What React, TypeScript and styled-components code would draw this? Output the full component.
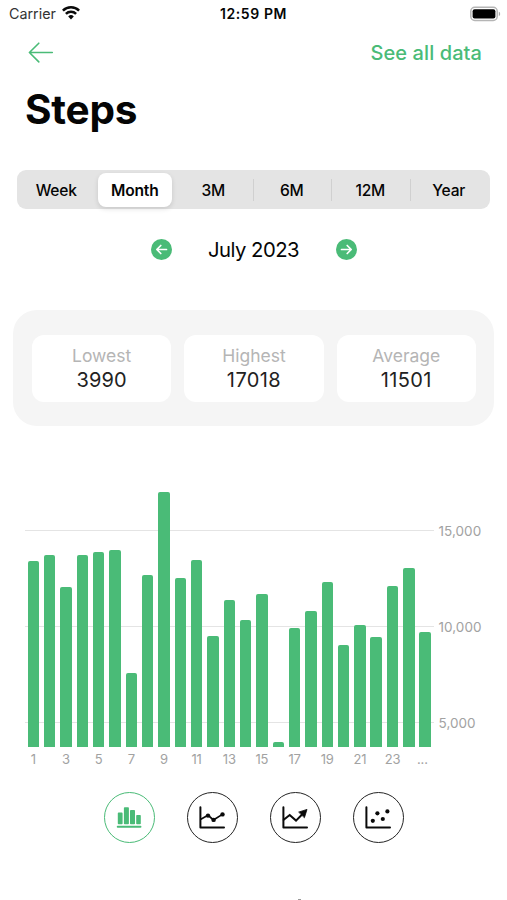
import React from "react";
import styled, { createGlobalStyle } from "styled-components";

const GREEN = "#4abb77";

const GlobalStyle = createGlobalStyle`
  *, *::before, *::after { box-sizing: border-box; }
  body { margin: 0; background: #fff; overflow: hidden; }
  button { border: 0; padding: 0; margin: 0; background: none; font: inherit; color: inherit; }
`;

const Screen = styled.main`
  width: 507px;
  height: 900px;
  overflow: hidden;
  background: #fff;
  color: #050505;
  font-family: Inter, "Liberation Sans", sans-serif;
  display: flex;
  flex-direction: column;
`;

const StatusBar = styled.div`
  height: 28px;
  padding: 0 6px 0 9px;
  display: grid;
  grid-template-columns: 1fr auto 1fr;
  align-items: center;
  line-height: 28px;
`;

const Carrier = styled.div`
  display: flex;
  align-items: center;
  gap: 6px;
  font-size: 14.3px;
  color: #333;
  svg { margin-top: -2px; }
`;

const Clock = styled.div`
  font-size: 14px;
  font-weight: 600;
  letter-spacing: 0.6px;
  margin-left: -3px;
`;

const Battery = styled.svg`
  justify-self: end;
  margin-top: -1px;
`;

const NavBar = styled.nav`
  height: 50px;
  padding: 0 25px 0 28px;
  display: flex;
  align-items: center;
  justify-content: space-between;
  color: ${GREEN};
`;

const SeeAll = styled.button`
  font-size: 20px;
  font-weight: 500;
  letter-spacing: 0.08px;
`;

const Title = styled.h1`
  margin: 8px 0 0 25px;
  font-size: 40.5px;
  line-height: 48px;
  font-weight: 700;
  letter-spacing: -0.2px;
`;

const Segments = styled.div`
  margin: 36px 17px 0;
  height: 39px;
  border-radius: 9px;
  background: #e4e4e4;
  display: grid;
  grid-template-columns: repeat(6, 1fr);
  padding: 3px 2px 2px 0;
`;

const Segment = styled.button<{ $active?: boolean; $divided?: boolean }>`
  margin: ${(p) => (p.$active ? "0 2px" : "0")};
  border-radius: ${(p) => (p.$active ? "8px" : "0")};
  background: ${(p) =>
    p.$active
      ? "#fff"
      : p.$divided
        ? "linear-gradient(#d0d0d0, #d0d0d0) left 0 center / 1px 22px no-repeat"
        : "none"};
  box-shadow: ${(p) => (p.$active ? "0 2px 5px rgba(0, 0, 0, 0.12)" : "none")};
  font-size: 15.6px;
  font-weight: ${(p) => (p.$active ? 600 : 500)};
  letter-spacing: -0.2px;
`;

const Period = styled.div`
  height: 80px;
  display: grid;
  grid-template-columns: 21px 164px 21px;
  justify-content: center;
  align-items: center;
`;

const PeriodLabel = styled.div`
  text-align: center;
  font-size: 20.3px;
  letter-spacing: -0.5px;
`;

const Summary = styled.section`
  margin: 21px 13px 0;
  height: 116px;
  border-radius: 24px;
  background: #f5f5f5;
  padding: 25px 18px 24px 19px;
  display: grid;
  grid-template-columns: repeat(3, 1fr);
  gap: 13px;
`;

const Stat = styled.div`
  border-radius: 12px;
  background: #fff;
  display: flex;
  flex-direction: column;
  align-items: center;
  padding-top: 9px;
`;

const StatLabel = styled.span`
  font-size: 17.5px;
  line-height: 24px;
  color: #b5b5b5;
`;

const StatValue = styled.span<{ $wide?: boolean }>`
  font-size: 20px;
  line-height: 24px;
  color: #222;
  letter-spacing: ${(p) => (p.$wide ? "0.4px" : "0.1px")};
`;

const Chart = styled.section`
  margin: 54px 0 0 25px;
  display: grid;
  grid-template-columns: 409px 1fr;
  grid-template-rows: 266.5px 27px;
`;

const GridLines = styled.div`
  grid-area: 1 / 1;
  padding-top: 50px;
  display: flex;
  flex-direction: column;
  gap: 95.2px;
`;

const GridLine = styled.div`
  height: 1px;
  background: #e4e4e4;
`;

const Bars = styled.div`
  grid-area: 1 / 1;
  padding: 0 3px 0 2.6px;
  display: flex;
  justify-content: space-between;
  align-items: flex-end;
`;

const Bar = styled.div`
  width: 11.4px;
  border-radius: 2px 2px 0 0;
  background: ${GREEN};
`;

const YAxis = styled.div`
  grid-area: 1 / 2;
  padding: 38.5px 0 0 4.5px;
  display: flex;
  flex-direction: column;
  gap: 72.3px;
  font-size: 13.5px;
  line-height: 24px;
  letter-spacing: 0.05px;
  color: #a2a2a2;
`;

const XAxis = styled.div`
  grid-area: 2 / 1;
  display: grid;
  grid-template-columns: repeat(12, 32.66px) 27px;
  margin-left: -8px;
  font-size: 13px;
  line-height: 24px;
  letter-spacing: -0.2px;
  color: #a2a2a2;
  text-align: center;
`;

const ChartTypes = styled.div`
  margin-top: 18px;
  display: flex;
  justify-content: center;
  gap: 32px;
`;

const TypeButton = styled.button<{ $active?: boolean }>`
  width: 51px;
  height: 51px;
  border-radius: 50%;
  border: 1.5px solid ${(p) => (p.$active ? GREEN : "#242424")};
  color: ${(p) => (p.$active ? GREEN : "#0a0a0a")};
  display: grid;
  place-items: center;
`;

const HomeHint = styled.div`
  margin: auto auto 0;
  padding-left: 91px;
  height: 1px;
  &::after {
    content: "";
    display: block;
    width: 3px;
    height: 1px;
    background: #999;
  }
`;

const SEGMENTS = ["Week", "Month", "3M", "6M", "12M", "Year"];

const STEPS = [
  13400, 13743, 12065, 13712, 13899, 14003, 7597, 12673, 17018, 12532, 13452,
  9519, 11374, 10350, 11701, 3990, 9919, 10802, 12309, 9036, 10075, 9483,
  12101, 13068, 9743,
];

const AXIS_MIN = 3780;
const PX_PER_STEP = 0.01925;

const DAYS = ["1", "3", "5", "7", "9", "11", "13", "15", "17", "19", "21", "23", "..."];

function WifiIcon() {
  return (
    <svg width="18" height="14" viewBox="0 0 18 14" fill="none" stroke="#0a0a0a" strokeWidth="2.5">
      <path d="M0.9 4.7a11.5 11.5 0 0 1 16.2 0" />
      <path d="M3.9 7.9a7.2 7.2 0 0 1 10.2 0" />
      <path d="M6.2 10.4a4 4 0 0 1 5.6 0L9 13.4z" fill="#0a0a0a" stroke="none" />
    </svg>
  );
}

function BatteryIcon() {
  return (
    <Battery width="31" height="16" viewBox="0 0 31 16">
      <rect x="0.8" y="1.3" width="26.4" height="13.2" rx="4" fill="#fff" stroke="#b5b5b5" strokeWidth="1.5" />
      <rect x="2.6" y="3.2" width="22.8" height="9.4" rx="2" fill="#000" />
      <path d="M28.8 5.7c1.8.6 1.8 3.8 0 4.4z" fill="#aaa" />
    </Battery>
  );
}

function BackArrow() {
  return (
    <svg width="26" height="22" viewBox="0 0 26 22" fill="none" stroke="currentColor" strokeWidth="1.6" strokeLinecap="round" strokeLinejoin="round">
      <path d="M24.3 10.5H1.4M10.8 1.2 1.4 10.5l9.4 9.4" />
    </svg>
  );
}

function CircleArrow({ right }: { right?: boolean }) {
  return (
    <svg width="21" height="21" viewBox="0 0 21 21" fill="none">
      <circle cx="10.5" cy="10.5" r="10.5" fill={GREEN} />
      <path
        d={right ? "M5.5 10.5h9.5M11.2 6.5l4 4-4 4" : "M15.5 10.5H6M9.8 6.5l-4 4 4 4"}
        stroke="#fff"
        strokeWidth="1.7"
        strokeLinecap="round"
        strokeLinejoin="round"
      />
    </svg>
  );
}

function TypeIcon({ kind }: { kind: string }) {
  if (kind === "bar") {
    return (
      <svg width="26" height="24" viewBox="0 0 26 24" fill="currentColor">
        <rect x="1.8" y="7.6" width="4.8" height="11.6" rx="0.8" />
        <rect x="7.9" y="2.2" width="5" height="17" rx="0.8" />
        <rect x="14" y="5" width="5" height="14.2" rx="0.8" />
        <rect x="20.2" y="10" width="4.6" height="9.2" rx="0.8" />
        <rect x="0.8" y="20.8" width="24.6" height="2" rx="0.8" />
      </svg>
    );
  }
  return (
    <svg width="26" height="24" viewBox="0 0 26 24" fill="none" stroke="currentColor" strokeWidth="2" strokeLinecap="round" strokeLinejoin="round">
      <path d="M1.4 2.2v20.3H25" />
      {kind === "line" && (
        <>
          <path d="m1.8 14.2 7.2-4 5.4 4.8 9-5.6" strokeWidth="1.7" />
          <g fill="currentColor" stroke="none">
            <circle cx="9" cy="10.6" r="2.2" />
            <circle cx="14.6" cy="14.9" r="2.2" />
            <circle cx="23.5" cy="9.4" r="2.2" />
          </g>
        </>
      )}
      {kind === "trend" && (
        <>
          <path d="m1.7 14.8 6-4.8 6.3 5.6 7.8-7.8" strokeLinejoin="miter" />
          <path d="m17 7 8-2.6-2.5 8z" fill="currentColor" stroke="currentColor" strokeWidth="0.8" />
        </>
      )}
      {kind === "scatter" && (
        <g fill="currentColor" stroke="none">
          <circle cx="7.8" cy="15.8" r="2.1" />
          <circle cx="12.4" cy="8.3" r="2.1" />
          <circle cx="17.8" cy="14" r="2.1" />
          <circle cx="22.4" cy="6.4" r="2.1" />
        </g>
      )}
    </svg>
  );
}

export default function App() {
  return (
    <Screen>
      <GlobalStyle />
      <StatusBar>
        <Carrier>
          Carrier
          <WifiIcon />
        </Carrier>
        <Clock>12:59 PM</Clock>
        <BatteryIcon />
      </StatusBar>
      <NavBar>
        <BackArrow />
        <SeeAll>See all data</SeeAll>
      </NavBar>
      <Title>Steps</Title>
      <Segments>
        {SEGMENTS.map((label, i) => (
          <Segment key={label} $active={i === 1} $divided={i > 2}>
            {label}
          </Segment>
        ))}
      </Segments>
      <Period>
        <CircleArrow />
        <PeriodLabel>July 2023</PeriodLabel>
        <CircleArrow right />
      </Period>
      <Summary>
        {[["Lowest", "3990"], ["Highest", "17018"], ["Average", "11501"]].map(([label, value]) => (
          <Stat key={label}>
            <StatLabel>{label}</StatLabel>
            <StatValue $wide={value.length > 4}>{value}</StatValue>
          </Stat>
        ))}
      </Summary>
      <Chart>
        <GridLines>
          <GridLine />
          <GridLine />
          <GridLine />
        </GridLines>
        <Bars>
          {STEPS.map((steps, i) => (
            <Bar key={i} style={{ height: (steps - AXIS_MIN) * PX_PER_STEP }} />
          ))}
        </Bars>
        <YAxis>
          <span>15,000</span>
          <span>10,000</span>
          <span>5,000</span>
        </YAxis>
        <XAxis>
          {DAYS.map((d) => (
            <span key={d}>{d}</span>
          ))}
        </XAxis>
      </Chart>
      <ChartTypes>
        {["bar", "line", "trend", "scatter"].map((kind) => (
          <TypeButton key={kind} $active={kind === "bar"}>
            <TypeIcon kind={kind} />
          </TypeButton>
        ))}
      </ChartTypes>
      <HomeHint />
    </Screen>
  );
}
